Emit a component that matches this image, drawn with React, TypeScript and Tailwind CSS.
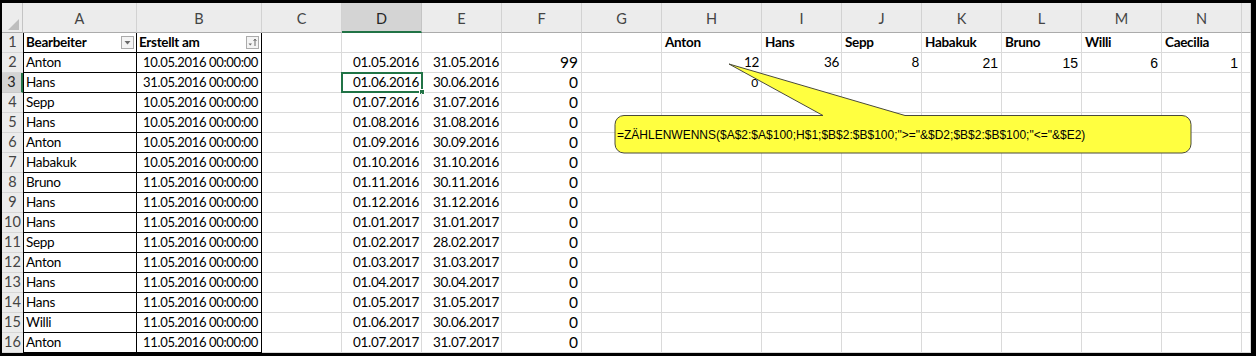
import React from 'react';

const names = ['Anton', 'Hans', 'Sepp', 'Hans', 'Anton', 'Habakuk', 'Bruno', 'Hans', 'Hans', 'Sepp', 'Anton', 'Hans', 'Hans', 'Willi', 'Anton'];
const created = ['10.05.2016', '31.05.2016', '10.05.2016', '10.05.2016', '10.05.2016', '10.05.2016', '11.05.2016', '11.05.2016', '11.05.2016', '11.05.2016', '11.05.2016', '11.05.2016', '11.05.2016', '11.05.2016', '11.05.2016'];
const starts = ['01.05.2016', '01.06.2016', '01.07.2016', '01.08.2016', '01.09.2016', '01.10.2016', '01.11.2016', '01.12.2016', '01.01.2017', '01.02.2017', '01.03.2017', '01.04.2017', '01.05.2017', '01.06.2017', '01.07.2017'];
const ends = ['31.05.2016', '30.06.2016', '31.07.2016', '31.08.2016', '30.09.2016', '31.10.2016', '30.11.2016', '31.12.2016', '31.01.2017', '28.02.2017', '31.03.2017', '30.04.2017', '31.05.2017', '30.06.2017', '31.07.2017'];
const colLetters = ['A', 'B', 'C', 'D', 'E', 'F', 'G', 'H', 'I', 'J', 'K', 'L', 'M', 'N', ''];
const people = ['Anton', 'Hans', 'Sepp', 'Habakuk', 'Bruno', 'Willi', 'Caecilia'];
const counts = ['12', '36', '8', '21', '15', '6', '1'];

const GRID = 'border-r border-b border-[#dadada]';
const BLACK_A = 'border-l border-r border-b border-black';
const BLACK_B = 'border-r border-b border-black';

function FilterButton({ sorted }: { sorted?: boolean }) {
  return (
    <div className="w-[13px] h-[13px] border border-[#ababab] bg-[#f4f4f4] flex items-center justify-center shrink-0">
      {sorted ? (
        <svg width="11" height="11" viewBox="0 0 11 11">
          <path d="M1.5 6.5 L5 6.5 L3.25 8.5 Z" fill="#6b6b6b" />
          <path d="M8 9 L8 2.5" stroke="#6b6b6b" strokeWidth="1" />
          <path d="M6.6 4 L8 2 L9.4 4" stroke="#6b6b6b" strokeWidth="1" fill="none" />
        </svg>
      ) : (
        <svg width="9" height="9" viewBox="0 0 9 9">
          <path d="M1.5 3 L7.5 3 L4.5 6.5 Z" fill="#6b6b6b" />
        </svg>
      )}
    </div>
  );
}

function Cell({ r, c }: { r: number; c: number }) {
  const i = r - 2;
  if (c === 0) {
    if (r === 1)
      return (
        <div className={`${BLACK_A} flex items-center justify-between pl-[2px] pr-[2px] font-bold text-black`}>
          <span>Bearbeiter</span>
          <FilterButton />
        </div>
      );
    return <div className={`${BLACK_A} flex items-center pl-[2px] text-black`}>{names[i]}</div>;
  }
  if (c === 1) {
    if (r === 1)
      return (
        <div className={`${BLACK_B} flex items-center justify-between pl-[2px] pr-[2px] font-bold text-black`}>
          <span>Erstellt am</span>
          <FilterButton sorted />
        </div>
      );
    return (
      <div className={`${BLACK_B} flex items-center justify-end pr-[3px] text-black whitespace-nowrap text-[13px] tracking-[-0.35px]`}>
        {created[i]} 00:00:00
      </div>
    );
  }
  if (c === 3) {
    if (r === 1) return <div className={GRID} />;
    return (
      <div className={`${GRID} relative flex items-center justify-end pr-[2px] text-black`}>
        {starts[i]}
        {r === 3 && (
          <>
            <div className="absolute left-[-1px] top-[-1px] right-[-2px] bottom-[-1px] border-2 border-[#217346]" />
            <div className="absolute right-[-4px] bottom-[-3px] w-[6px] h-[6px] bg-[#217346] border border-white" />
          </>
        )}
      </div>
    );
  }
  if (c === 4) {
    if (r === 1) return <div className={GRID} />;
    return <div className={`${GRID} flex items-center justify-end pr-[2px] text-black`}>{ends[i]}</div>;
  }
  if (c === 5) {
    if (r === 1) return <div className={GRID} />;
    return (
      <div className={`${GRID} flex items-center justify-end pr-[3px] text-black text-[15.5px] tracking-normal`}>
        {r === 2 ? '99' : '0'}
      </div>
    );
  }
  if (c >= 7 && c <= 13) {
    const k = c - 7;
    if (r === 1)
      return <div className={`${GRID} flex items-center pl-[3px] font-bold text-black`}>{people[k]}</div>;
    if (r === 2) {
      if (k < 3)
        return <div className={`${GRID} flex items-center justify-end pr-[2px] text-black`}>{counts[k]}</div>;
      return (
        <div className={`${GRID} flex items-center justify-end pr-[3px] text-black text-[14px] tracking-normal font-['Liberation_Sans',Arial,sans-serif]`}>
          {counts[k]}
        </div>
      );
    }
    if (r === 3 && k === 0)
      return <div className={`${GRID} flex items-center justify-end pr-[3px] text-black text-[12px]`}>0</div>;
  }
  return <div className={GRID} />;
}

export default function App() {
  const rows = Array.from({ length: 16 }, (_, k) => k + 1);
  return (
    <div className="relative w-[1256px] h-[356px] bg-black pt-[3px] pl-[2px] pr-[5px] pb-[3px] overflow-hidden">
      <div className="grid bg-white w-[1249px] h-[350px] grid-cols-[21px_114px_125px_80px_80px_80px_80px_80px_100px_80px_80px_80px_80px_80px_80px_9px] grid-rows-[30px_repeat(16,20px)] font-['Lato',sans-serif] text-[13.5px] tracking-[-0.3px] leading-none">
        <div className="relative bg-[#ececec] border-r border-b border-r-[#c4c4c4] border-b-[#ababab]">
          <svg className="absolute left-[5px] top-[16px]" width="12" height="12" viewBox="0 0 12 12">
            <path d="M12 0 L12 11 L1 11 Z" fill="#bdbdbd" />
          </svg>
        </div>
        {colLetters.map((l, c) =>
          c === 3 ? (
            <div
              key={c}
              className="bg-[#d4d4d4] border-r border-r-[#c4c4c4] border-b-2 border-b-[#217346] flex items-end justify-center pb-[5px] text-[#262626] text-[14.5px] tracking-normal"
            >
              {l}
            </div>
          ) : (
            <div
              key={c}
              className="bg-[#ececec] border-r border-r-[#d2d2d2] border-b border-b-[#ababab] flex items-end justify-center pb-[6px] text-[#444444] text-[14.5px] tracking-normal"
            >
              {l}
            </div>
          )
        )}
        {rows.map((r) => (
          <React.Fragment key={r}>
            {r === 3 ? (
              <div className="bg-[#d4d4d4] border-b border-b-[#c9c9c9] border-r-2 border-r-[#217346] flex items-center justify-center text-[#262626] text-[14.5px] tracking-normal">
                {r}
              </div>
            ) : (
              <div className="bg-[#ececec] border-b border-b-[#d6d6d6] flex items-center justify-center text-[#444444] text-[14.5px] tracking-normal">
                {r}
              </div>
            )}
            {colLetters.map((_, c) => (
              <Cell key={c} r={r} c={c} />
            ))}
          </React.Fragment>
        ))}
      </div>

      <svg className="absolute left-0 top-0 pointer-events-none" width="1256" height="356" viewBox="0 0 1256 356">
        <path
          d="M624 115.5 L823 115.5 L729 64 L905 115.5 L1182 115.5 A9 9 0 0 1 1191 124.5 L1191 144 A9 9 0 0 1 1182 153 L624 153 A9 9 0 0 1 615 144 L615 124.5 A9 9 0 0 1 624 115.5 Z"
          fill="#ffff40"
          stroke="#4a4a3a"
          strokeWidth="1"
        />
      </svg>
      <div className="absolute left-[617px] top-[116px] h-[37px] flex items-center font-['Liberation_Sans',Arial,sans-serif] text-[12px] text-black whitespace-nowrap">
        =ZÄHLENWENNS($A$2:$A$100;H$1;$B$2:$B$100;"&gt;="&amp;$D2;$B$2:$B$100;"&lt;="&amp;$E2)
      </div>
    </div>
  );
}
